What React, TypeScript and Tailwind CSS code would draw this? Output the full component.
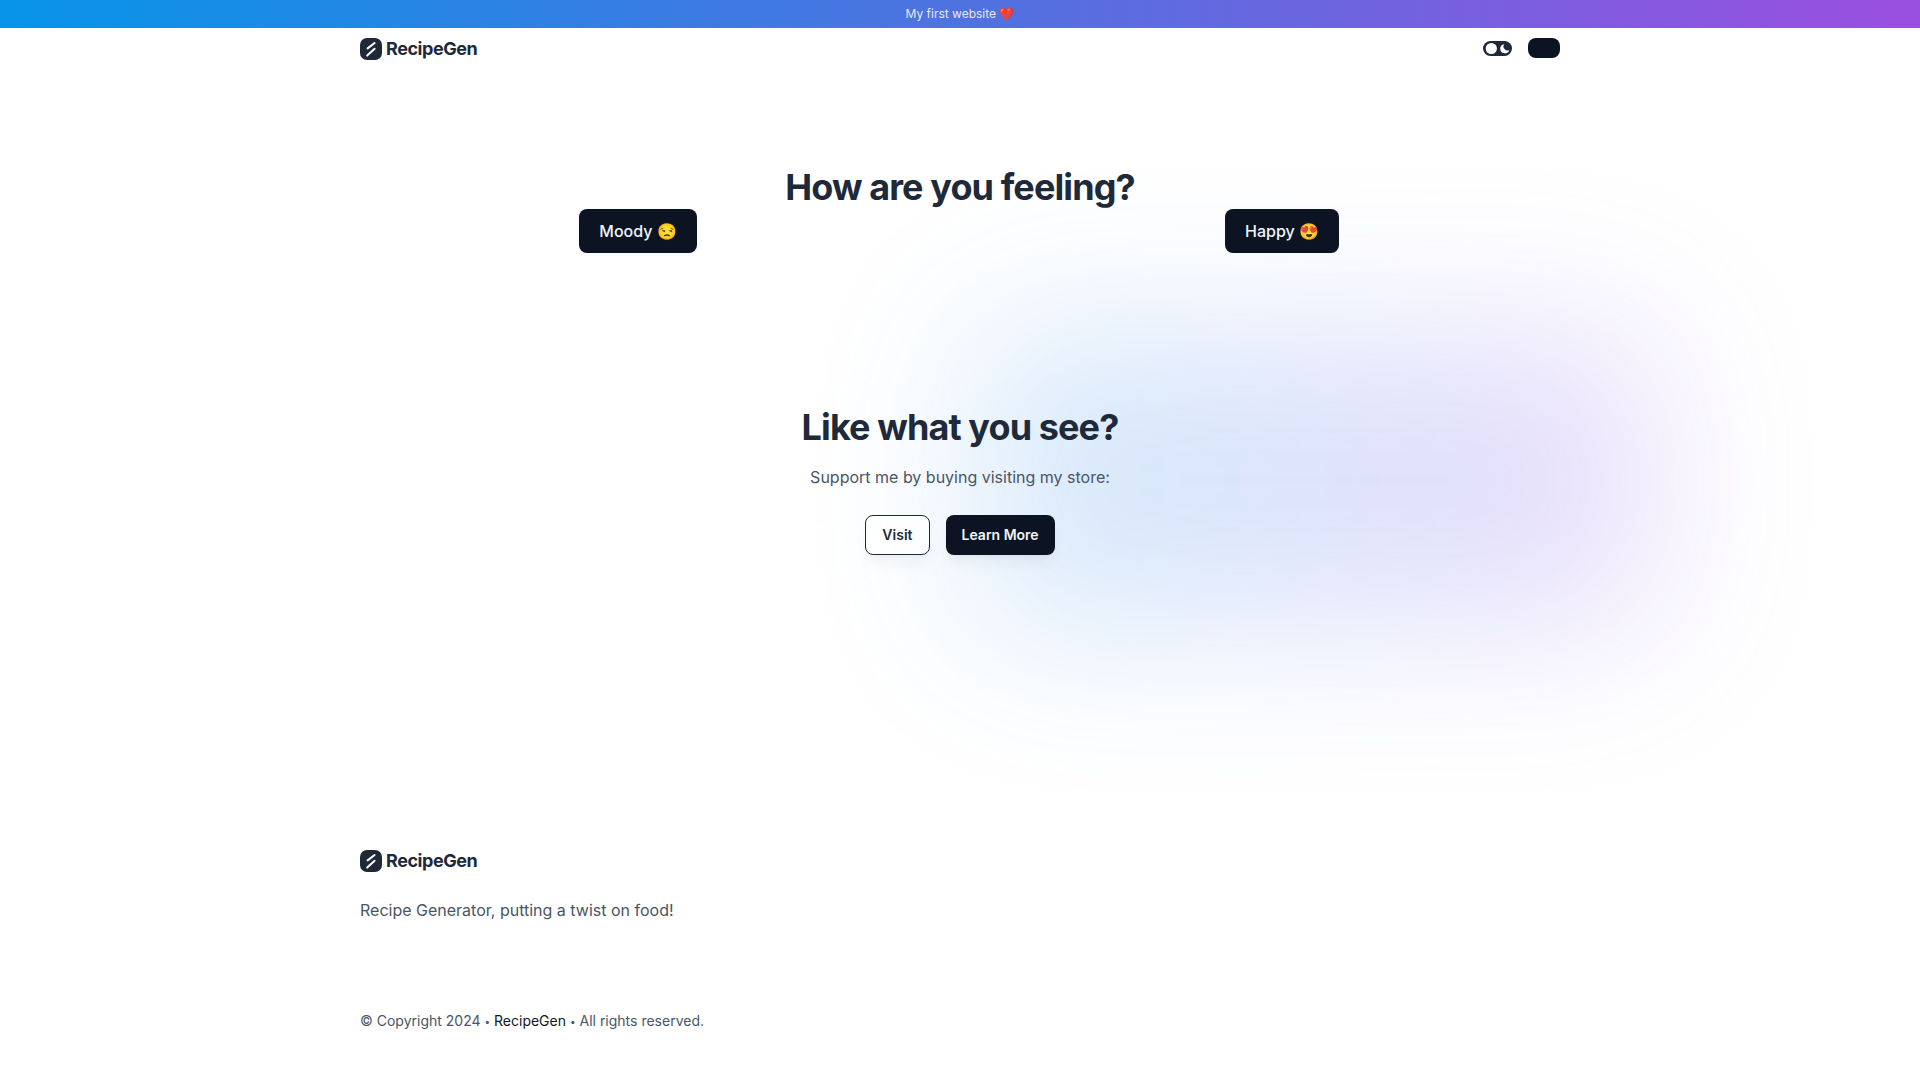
function Logo() {
  return (
    <a href="#" className="flex items-center gap-1 text-[18px] leading-7 font-bold text-gray-800">
      <svg viewBox="0 0 22 22" className="size-[22px]" aria-hidden="true">
        <rect width="22" height="22" rx="7" fill="#1f2937" />
        <path d="M7.6 10.4 14.6 5M7.2 17.6l7.4-6.8" stroke="#fff" strokeWidth="2" strokeLinecap="round" fill="none" />
      </svg>
      <span className="tracking-tight">RecipeGen</span>
    </a>
  );
}

function ThemeToggle() {
  return (
    <button type="button" aria-label="Toggle theme" className="block">
      <svg viewBox="0 0 29 15" className="h-[15px] w-[29px]" aria-hidden="true">
        <rect width="29" height="15" rx="7.5" fill="#1f2937" />
        <circle cx="8.3" cy="7.5" r="5.6" fill="#fff" />
        <path d="M21 3.2a4.6 4.6 0 1 0 5.2 6A4.2 4.2 0 0 1 21 3.2Z" fill="#fff" />
      </svg>
    </button>
  );
}

function Bullet() {
  return <span className="align-[1px] text-[10px] leading-none">•</span>;
}

export default function App() {
  return (
    <div className="relative min-h-screen overflow-hidden bg-white font-['Inter',sans-serif] text-gray-800">
      <p className="bg-linear-to-r/srgb from-[#0694e8] via-[#4f72e0] to-[#9b4fe0] py-1.5 text-center text-xs leading-4 text-[#e3e9fb]">
        My first website ❤️
      </p>
      <div className="pointer-events-none absolute top-[330px] left-[51%] h-[300px] w-[35%] bg-linear-to-r/srgb from-[#2b94e8] via-[#4f74ea] to-[#9050e8] opacity-20 blur-[84px]" aria-hidden="true" />

      <header className="relative mx-auto flex max-w-[1200px] items-center justify-between pt-[7px]">
        <Logo />
        <div className="flex items-center gap-4 pb-0.5">
          <ThemeToggle />
          <button type="button" aria-label="Menu" className="h-5 w-8 rounded-lg bg-[#0c1424]" />
        </div>
      </header>

      <main className="relative">
        <section className="mx-auto max-w-7xl pt-[104px] text-center">
          <h2 className="text-4xl leading-10 font-bold tracking-tight">How are you feeling?</h2>
          <div className="mt-0.5 grid grid-cols-2 justify-items-center gap-2">
            <button type="button" className="h-11 rounded-lg bg-[#0c1424] px-5 text-base font-medium text-slate-100">
              Moody 😒
            </button>
            <button type="button" className="h-11 rounded-lg bg-[#0c1424] px-5 text-base font-medium text-slate-100">
              Happy 😍
            </button>
          </div>
        </section>

        <section className="pt-[154px] text-center">
          <h2 className="text-4xl leading-10 font-bold tracking-tight">Like what you see?</h2>
          <p className="mt-4 leading-7 text-gray-600">Support me by buying visiting my store:</p>
          <div className="mt-6 flex justify-center gap-4">
            <a href="#" className="flex h-10 items-center rounded-lg border border-gray-800 bg-white/80 px-4 text-sm font-semibold shadow-lg shadow-slate-900/5">
              Visit
            </a>
            <a href="#" className="flex h-10 items-center rounded-lg bg-[#0c1424] px-4 text-sm font-semibold text-slate-100 shadow-lg shadow-slate-900/5">
              Learn More
            </a>
          </div>
        </section>
      </main>

      <footer className="relative mx-auto max-w-[1200px] pt-[292px]">
        <Logo />
        <p className="mt-[21px] leading-7 text-gray-600">Recipe Generator, putting a twist on food!</p>
        <p className="mt-[87px] text-sm leading-5 text-gray-600">
          © Copyright 2024 <Bullet /> <a href="#" className="text-gray-900">RecipeGen</a> <Bullet /> All rights reserved.
        </p>
      </footer>
    </div>
  );
}
